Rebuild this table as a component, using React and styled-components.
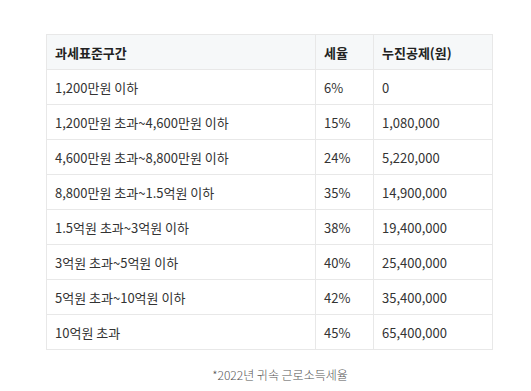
import styled, { createGlobalStyle } from 'styled-components';

const GlobalStyle = createGlobalStyle`
  html, body {
    margin: 0;
    padding: 0;
    background: #fff;
  }
  body {
    font-family: "Noto Sans CJK KR", "Noto Sans", sans-serif;
    color: #333;
  }
`;

const Figure = styled.figure`
  margin: 0;
  padding: 34px 0 0 46px;
  width: 468px;
`;

const Table = styled.table`
  width: 446px;
  border-collapse: collapse;
  table-layout: fixed;
  font-size: 13px;
  color: #333;
`;

const Th = styled.th`
  width: ${(p) => p.$w}px;
  height: 35px;
  padding: 0 8px;
  box-sizing: border-box;
  text-align: left;
  font-weight: 700;
  color: #222;
  background-color: #f6f8f9;
  border: 1px solid #e8e8e8;
`;

const Td = styled.td`
  height: 35px;
  padding: 0 8px;
  box-sizing: border-box;
  border: 1px solid #e8e8e8;
  font-weight: 400;
`;

const Caption = styled.figcaption`
  margin-top: 16px;
  text-align: center;
  font-size: 12px;
  color: #555;
  font-weight: 300;
`;

const rows = [
  ['1,200만원 이하', '6%', '0'],
  ['1,200만원 초과~4,600만원 이하', '15%', '1,080,000'],
  ['4,600만원 초과~8,800만원 이하', '24%', '5,220,000'],
  ['8,800만원 초과~1.5억원 이하', '35%', '14,900,000'],
  ['1.5억원 초과~3억원 이하', '38%', '19,400,000'],
  ['3억원 초과~5억원 이하', '40%', '25,400,000'],
  ['5억원 초과~10억원 이하', '42%', '35,400,000'],
  ['10억원 초과', '45%', '65,400,000'],
];

const App = () => {
  return (
    <>
      <GlobalStyle />
      <Figure>
        <Table>
          <thead>
            <tr>
              <Th $w={269}>과세표준구간</Th>
              <Th $w={58}>세율</Th>
              <Th $w={119}>누진공제(원)</Th>
            </tr>
          </thead>
          <tbody>
            {rows.map((r) => (
              <tr key={r[0]}>
                <Td>{r[0]}</Td>
                <Td>{r[1]}</Td>
                <Td>{r[2]}</Td>
              </tr>
            ))}
          </tbody>
        </Table>
        <Caption>*2022년 귀속 근로소득세율</Caption>
      </Figure>
    </>
  );
};

export default App;
